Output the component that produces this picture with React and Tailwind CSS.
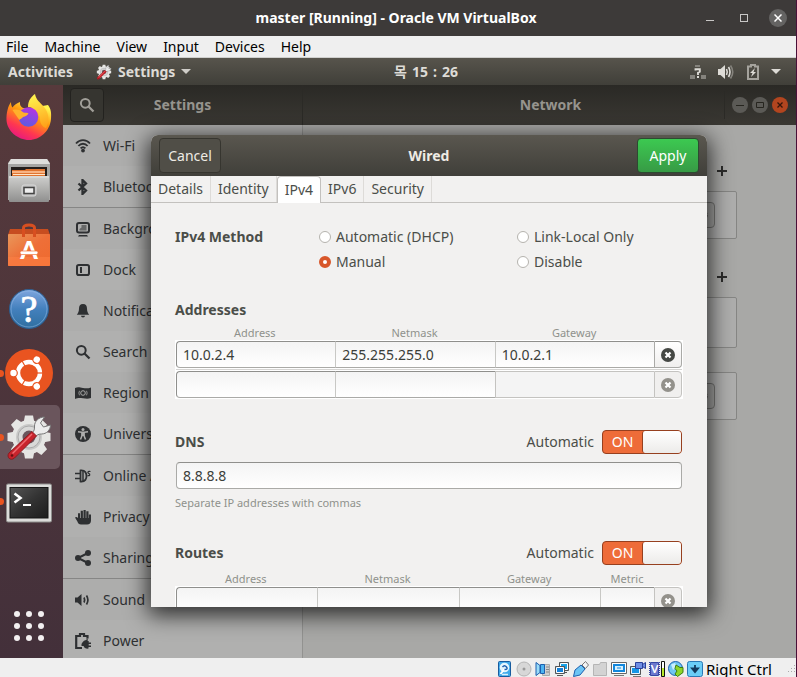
import React from "react";

const menus = ["File", "Machine", "View", "Input", "Devices", "Help"];

const sidebarGroups = [
  [
    ["Wi-Fi", "wifi"],
    ["Bluetooth", "bluetooth"],
  ],
  [
    ["Background", "background"],
    ["Dock", "dock"],
    ["Notifications", "bell"],
    ["Search", "search"],
    ["Region & Language", "region"],
    ["Universal Access", "access"],
  ],
  [
    ["Online Accounts", "online"],
    ["Privacy", "privacy"],
    ["Sharing", "sharing"],
  ],
  [
    ["Sound", "sound"],
    ["Power", "power"],
  ],
];

const glyphs = {
  wifi: (
    <g fill="none" stroke="currentColor" strokeWidth="1.8">
      <path d="M1 5.5C5 1 11 1 15 5.5" />
      <path d="M3.4 8C6 5 10 5 12.6 8" />
      <path d="M5.6 10.4c1.5-1.5 3.300-1.500 4.800 0" />
      <circle cx="8" cy="12.600" r="1.900" fill="currentColor" stroke="none" />
    </g>
  ),
  bluetooth: (
    <path d="M3.500 4.500 11 11.500 7.500 15V1L11 4.500 3.500 11.500" fill="none" stroke="currentColor" strokeWidth="2.300" />
  ),
  background: (
    <g>
      <rect x="2" y="2" width="12" height="9.500" rx="2" fill="none" stroke="currentColor" strokeWidth="2" />
      <path d="M4.500 9.500V8l2-1.500V4h5v5.500z" fill="currentColor" opacity=".55" />
      <path d="M4 14h8l1 1.500H3z" fill="currentColor" />
    </g>
  ),
  dock: (
    <g fill="none" stroke="currentColor">
      <rect x="2" y="3" width="12" height="10" rx="1.800" strokeWidth="2" />
      <path d="M6 5v6" strokeWidth="2" />
    </g>
  ),
  bell: (
    <path
      d="M8 1c2.900 0 4 2 4 4.500 0 3 .8 4.600 2.200 6.200H1.800C3.200 10.100 4 8.500 4 5.500 4 3 5.100 1 8 1zM6 12.800h4a2 1.700 0 0 1-4 0z"
      fill="currentColor"
    />
  ),
  search: (
    <g fill="none" stroke="currentColor" strokeWidth="2">
      <circle cx="6.300" cy="6.300" r="4.400" />
      <path d="m9.500 9.500 5 5" strokeWidth="2.300" />
    </g>
  ),
  region: (
    <g>
      <path d="M0 3c3-1.500 5-.500 8 0s5 .500 8-.500V13c-3 1.200-5 .800-8 .300S3 12.500 0 14z" fill="currentColor" />
      <circle cx="8" cy="8" r="2.300" fill="none" stroke="#a9a9a8" />
      <path d="M4.500 5.800a4.500 4.500 0 0 0 0 4.500M11.500 5.800a4.500 4.500 0 0 1 0 4.500" fill="none" stroke="#a9a9a8" strokeWidth=".8" />
    </g>
  ),
  access: (
    <g>
      <circle cx="8" cy="8" r="8" fill="currentColor" />
      <circle cx="8" cy="3.400" r="1.500" fill="#adadac" />
      <path d="M3 5.800 6.800 6.200h2.400L13 5.800M7 6.500v3L5.500 13.500M9 6.500v3l1.500 4" fill="none" stroke="#adadac" strokeWidth="1.500" />
      <path d="M6.500 6h3v4h-3z" fill="#adadac" />
    </g>
  ),
  online: (
    <g fill="none" stroke="currentColor" strokeWidth="1.800">
      <path d="M5.500 2.500c5-.5 6 3 6 5.500s-1 6-6 5.500z" />
      <path d="M0 5.500h5M0 10.500h5M8 3v10" strokeWidth="1.500" />
      <path d="M15.500 3.500c-3-.8-3.200 1.300-1.800 1.900s1.800 2.800-1.200 2.200" strokeWidth="1.200" />
    </g>
  ),
  privacy: (
    <path
      d="M3 4.200h2V9h.7V1.800h2.200V9h.6V1h2.200v8h.6V2.200h2.200V9h.4V5.500H16v6c0 2.500-1.500 4-4 4H6c-2 0-3-1-3.600-3L0 8.500c1-1 2-.500 3 .5z"
      fill="currentColor"
    />
  ),
  sharing: (
    <g fill="currentColor">
      <path d="M13 3 3 8l10 5" fill="none" stroke="currentColor" strokeWidth="2" />
      <circle cx="3" cy="8" r="3" />
      <circle cx="13" cy="3" r="3" />
      <circle cx="13" cy="13" r="3" />
    </g>
  ),
  sound: (
    <g>
      <path d="M0 5.500h2.500L6.500 2v12L2.500 10.500H0z" fill="currentColor" />
      <path d="M9 5.500q1.300 2.500 0 5M11.500 3.500q2.800 4.500 0 9" fill="none" stroke="currentColor" strokeWidth="1.700" />
    </g>
  ),
  power: (
    <g>
      <path d="M12.500 5.500V3H9V1H5v2H1.200v12H7" fill="none" stroke="currentColor" strokeWidth="2.200" />
      <path d="M6.500 11q2-4 5-4V5.500h1.200V8h1v1.500H16V11h-2.300v1.500H16V14h-2.500v1.500q-4 .8-5-2.500H6.500z" fill="currentColor" />
    </g>
  ),
};

function Glyph({ name, className = "size-4" }) {
  return (
    <svg viewBox="0 0 16 16" className={className} aria-hidden="true">
      {glyphs[name]}
    </svg>
  );
}

function SettingsLogo({ className }) {
  const teeth = [0, 45, 90, 135, 180, 225, 270, 315];
  return (
    <svg viewBox="0 0 48 48" className={className} aria-hidden="true">
      <g fill="#e6e6e4">
        {teeth.map((a) => (
          <path key={a} d="M18.500 10 20 2.500h8l1.500 7.500z" transform={"rotate(" + a + " 24 24)"} />
        ))}
        <circle cx="24" cy="24" r="17" />
      </g>
      <circle cx="24" cy="24" r="13" fill="#c9c9c8" />
      <circle cx="24" cy="24" r="11" fill="#d9d9d8" stroke="#aaa" />
      <circle cx="24" cy="24" r="6.500" fill="#6a555c" />
      <path
        d="M27 20c2.500-2 2.500-4 2.500-7 0-4.500 4-9 10-9l-4 6 3 4 7-2c0 5-4 9-9 9-3 0-4.500 1-6.500 3z"
        fill="#ececec"
        stroke="#777"
      />
      <path d="M27 18.500 31.500 23 9.500 45c-4 3.500-8.500-1-5.500-5z" fill="#c8242c" stroke="#8c1a20" />
      <path d="M27 21 7.500 40.500" stroke="#ef6a70" strokeWidth="1.500" />
      <circle cx="7" cy="42.500" r="1.300" fill="#611" />
    </svg>
  );
}

function Firefox() {
  return (
    <svg viewBox="0 0 46 46" className="size-[46px]" aria-hidden="true">
      <defs>
        <linearGradient id="fx-body" x1=".8" y1=".1" x2=".25" y2="1">
          <stop offset="0" stopColor="#fff44f" />
          <stop offset=".35" stopColor="#ff980e" />
          <stop offset=".7" stopColor="#ff3750" />
          <stop offset="1" stopColor="#e31587" />
        </linearGradient>
        <linearGradient id="fx-globe" x1=".7" y1="0" x2=".3" y2="1">
          <stop offset="0" stopColor="#b833e1" />
          <stop offset="1" stopColor="#5b5ce0" />
        </linearGradient>
        <linearGradient id="fx-flame" x1=".4" y1="0" x2=".6" y2="1">
          <stop offset="0" stopColor="#fff44f" />
          <stop offset="1" stopColor="#ffa21a" />
        </linearGradient>
      </defs>
      <path
        d="M5 8c0 3 .5 4 1.500 5.500C8 11 11 9 14 8c-.5 3 1 5 3 6h8L42 11c3 4 3.500 8 3 14-1 12-11 21-22 21S1 37 .5 26C.300 19 2 12 5 8z"
        fill="url(#fx-body)"
      />
      <path d="M22 13c0-7 4-11 7-13 1 6 5 8 9 13 5 6 6 14 2 21-3-1-6-4-6-9 0-6-4-11-12-12z" fill="url(#fx-flame)" />
      <circle cx="22.500" cy="23" r="9.800" fill="url(#fx-globe)" />
      <path d="M6.500 16c5-1 8 0 11 2.500 2 .2 4 .2 5 1-1 2-3 3-5.500 3.500-1 1.500-3 2-3.500 3C12 24 9 20 6.500 16z" fill="#ffb02c" />
    </svg>
  );
}

function Files() {
  return (
    <svg viewBox="0 0 44 46" className="h-[46px] w-11" aria-hidden="true">
      <defs>
        <linearGradient id="cab" x1="0" y1="0" x2="0" y2="1">
          <stop offset="0" stopColor="#cfcfcd" />
          <stop offset="1" stopColor="#8f8f8e" />
        </linearGradient>
      </defs>
      <path d="M4 1h36l3 4v37H1V5z" fill="#a5a5a3" />
      <path d="M4 1h36l3 5H1z" fill="#dededc" />
      <path d="M4 9h36v9H4z" fill="#231e1c" />
      <path d="M5 12h13l1-1h19v8H5z" fill="#e07430" />
      <path d="M5 14h33" stroke="#ffc9a0" strokeWidth="1.500" />
      <path d="M6 16.500h32" stroke="#ffe4c8" />
      <rect x="2" y="18" width="40" height="26" rx="1" fill="url(#cab)" />
      <path d="M2 19h40" stroke="#e4e4e2" />
      <rect x="15" y="27" width="14" height="11" rx="2" fill="#bbb" stroke="#d8d8d8" />
      <rect x="17" y="29.500" width="10" height="6" fill="#eee" stroke="#444" strokeWidth="1.500" />
    </svg>
  );
}

function Software() {
  return (
    <svg viewBox="0 0 44 46" className="h-[46px] w-11" aria-hidden="true">
      <defs>
        <linearGradient id="bag" x1="0" y1="0" x2="1" y2="1">
          <stop offset="0" stopColor="#e9975a" />
          <stop offset=".5" stopColor="#ee6f38" />
          <stop offset="1" stopColor="#ef6a2e" />
        </linearGradient>
      </defs>
      <path d="M3 7h38l2 6H1z" fill="#c74d20" />
      <rect x="1" y="12" width="42" height="32" rx="1" fill="url(#bag)" />
      <path d="M16.500 15V6c0-4 11-4 11 0v9" fill="none" stroke="#d84f20" strokeWidth="3" />
      <path d="M1 35h42v9H1z" fill="#ff8146" opacity=".5" />
      <text x="22" y="37" textAnchor="middle" fontFamily="Lato, sans-serif" fontWeight="900" fontSize="25" fill="#fff">
        A
      </text>
      <rect x="13" y="29" width="18" height="3.500" rx="1.700" fill="#fff" stroke="#ef7238" strokeWidth=".7" />
    </svg>
  );
}

function HelpLogo() {
  return (
    <svg viewBox="0 0 42 42" className="size-[42px]" aria-hidden="true">
      <defs>
        <linearGradient id="help" x1="0" y1="0" x2="0" y2="1">
          <stop offset="0" stopColor="#7fa6de" />
          <stop offset=".5" stopColor="#4380bd" />
          <stop offset="1" stopColor="#2f6f9f" />
        </linearGradient>
      </defs>
      <circle cx="21" cy="21" r="19.500" fill="url(#help)" stroke="#2b5f92" />
      <circle cx="21" cy="21" r="18" fill="none" stroke="#8fb8e4" strokeWidth=".8" opacity=".7" />
      <text x="21" y="34" textAnchor="middle" fontFamily="Liberation Serif, serif" fontSize="38" fill="#fff" stroke="#fff" strokeWidth=".8">
        ?
      </text>
    </svg>
  );
}

function UbuntuLogo() {
  return (
    <svg viewBox="0 0 48 48" className="size-12" aria-hidden="true">
      <circle cx="24" cy="24" r="24" fill="#e95420" />
      <circle cx="24" cy="24" r="11" fill="none" stroke="#fff" strokeWidth="4.400" />
      {[0, 120, 240].map((a) => (
        <g key={a} transform={"rotate(" + a + " 24 24)"}>
          <path d="M16.500 24h-7" stroke="#e95420" strokeWidth="1.200" transform="rotate(60 24 24)" />
          <circle cx="8.500" cy="24" r="4.400" fill="#e95420" />
          <circle cx="8.500" cy="24" r="3.200" fill="#fff" />
        </g>
      ))}
    </svg>
  );
}

function Terminal() {
  return (
    <svg viewBox="0 -4 46 44" className="h-11 w-[46px]" aria-hidden="true">
      <defs>
        <linearGradient id="term" x1="0" y1="0" x2="1" y2="1">
          <stop offset="0" stopColor="#555" />
          <stop offset=".5" stopColor="#333" />
          <stop offset="1" stopColor="#1c1c1c" />
        </linearGradient>
      </defs>
      <rect x=".5" y="1" width="45" height="38" rx="1.500" fill="#dcdcda" stroke="#8f8f8d" />
      <rect x="4" y="4.500" width="38" height="30.500" fill="url(#term)" stroke="#151515" />
      <path d="m8.500 10.500 6 4.500-6 4.500" fill="none" stroke="#fff" strokeWidth="2.600" />
      <path d="M17 22h8" stroke="#fff" strokeWidth="2" />
    </svg>
  );
}

function AppGrid() {
  return (
    <svg viewBox="0 0 30 30" className="size-[30px]" aria-hidden="true">
      {[3, 15, 27].map((y) => [3, 15, 27].map((x) => <circle key={x + "-" + y} cx={x} cy={y} r="3" fill="#f3f0f1" />))}
    </svg>
  );
}

const dockApps = [
  { name: "Firefox", icon: <Firefox /> },
  { name: "Files", icon: <Files /> },
  { name: "Ubuntu Software", icon: <Software /> },
  { name: "Help", icon: <HelpLogo /> },
  { name: "Ubuntu", icon: <UbuntuLogo />, running: true },
  { name: "Settings", icon: <SettingsLogo className="size-12" />, running: true, active: true },
  { name: "Terminal", icon: <Terminal />, running: true },
];

function Dock() {
  return (
    <nav className="flex w-[63px] shrink-0 flex-col justify-between bg-linear-to-b from-[#573a3c] to-[#43303a]">
      <div>
        {dockApps.map((app) => (
          <button
            key={app.name}
            aria-label={app.name}
            className={
              "relative flex h-16 w-[60px] items-center justify-center rounded-r-[5px] pr-[2px] " +
              (app.active ? "bg-[#6a555c]" : "")
            }
          >
            {app.running && <span className="absolute top-[29px] -left-[3px] size-[7px] rounded-full bg-[#e95420]" />}
            {app.icon}
          </button>
        ))}
      </div>
      <button aria-label="Show Applications" className="flex h-16 w-[60px] items-center justify-center pr-[2px]">
        <AppGrid />
      </button>
    </nav>
  );
}

function TitleBar() {
  return (
    <header className="grid h-9 shrink-0 grid-cols-[100px_1fr_100px] items-center bg-[#3d3a39] text-white">
      <span />
      <h1 className="pr-1 text-center text-sm font-bold whitespace-nowrap">master [Running] - Oracle VM VirtualBox</h1>
      <div className="flex items-center justify-end gap-[21px] pr-[9px]">
        <button aria-label="Minimize" className="mt-[4px] h-px w-[8px] bg-[#c8c7c6]" />
        <button aria-label="Maximize" className="ml-[5px] size-[8px] border border-[#c8c7c6]" />
        <button aria-label="Close" className="flex size-[18px] items-center justify-center rounded-full bg-[#646362]">
          <svg viewBox="0 0 8 8" className="size-2" aria-hidden="true">
            <path d="m.5.5 7 7m0-7-7 7" stroke="#fff" strokeWidth="1.500" />
          </svg>
        </button>
      </div>
    </header>
  );
}

function TopBar() {
  return (
    <div className="flex h-[27px] shrink-0 items-center bg-linear-to-b from-[#57544c] to-[#403f39] text-sm font-bold text-[#dddbd6]">
      <div className="flex flex-1 items-center pl-2">
        <button>Activities</button>
        <button className="ml-[23px] flex items-center">
          <SettingsLogo className="size-4" />
          <span className="mr-[6px] ml-[6px]">Settings</span>
          <svg viewBox="0 0 10 5" className="h-[5px] w-[10px]" aria-hidden="true">
            <path d="M0 0h10L5 5z" fill="#cfcdc8" />
          </svg>
        </button>
      </div>
      <time className="flex gap-[5px] pl-[63px]">
        <span>목</span>
        <span>15</span>
        <span>:</span>
        <span>26</span>
      </time>
      <div className="flex flex-1 items-center justify-end pr-[15px]">
        <svg viewBox="0 0 16 16" className="size-4" aria-hidden="true">
          <path d="M0 11h5v4H0zM11 11h5v4h-5zM5 1h5v2H5z" fill="#85837d" />
          <path d="M5.500 6.500V5.200h4.300v2.500L8 8.800V11M7 13h2" fill="none" stroke="#dddbd6" strokeWidth="1.900" />
        </svg>
        <svg viewBox="0 0 16 16" className="ml-3 size-4" aria-hidden="true">
          <path d="M0 5h2.500L7 1v14l-4.500-4H0z" fill="#dddbd6" />
          <path d="M8.500 5q1.500 3 0 6M10.500 3q3 5 0 10" fill="none" stroke="#dddbd6" strokeWidth="1.600" />
          <path d="M12.500 1.500q4.500 6.500 0 13" fill="none" stroke="#85837d" strokeWidth="1.600" />
        </svg>
        <svg viewBox="0 0 12 16" className="ml-[13px] h-4 w-3" aria-hidden="true">
          <path d="M1 2.500h3V1h4v1.500h3V15H1z" fill="none" stroke="#a5a39d" strokeWidth="2" />
          <path d="M8 4 3 9h2.500L4 13l5-5H6.500z" fill="#dddbd6" />
        </svg>
        <svg viewBox="0 0 10 5" className="ml-3 h-[5px] w-[10px]" aria-hidden="true">
          <path d="M0 0h10L5 5z" fill="#dddbd6" />
        </svg>
      </div>
    </div>
  );
}

function SidebarPane() {
  return (
    <aside className="w-60 shrink-0 border-r border-[#929290] bg-[#b0b0af] text-[#2e3032]">
      {sidebarGroups.map((group, g) => (
        <ul key={g} className={g > 0 ? "border-t border-[#868685]" : ""}>
          {group.map(([label, icon]) => (
            <li key={label} className="flex h-[41px] items-center gap-3 overflow-hidden pl-3 text-sm whitespace-nowrap odd:bg-[#adadac]">
              <Glyph name={icon} className="size-4 shrink-0" />
              {label}
            </li>
          ))}
        </ul>
      ))}
    </aside>
  );
}

function Plus() {
  return (
    <div className="flex h-[30px] items-center justify-end pr-[10px]">
      <button aria-label="Add">
        <svg viewBox="0 0 10 10" className="block size-[10px]" aria-hidden="true">
          <path d="M5 0v10M0 5h10" stroke="#2c2c2b" strokeWidth="2" />
        </svg>
      </button>
    </div>
  );
}

function GearCard() {
  return (
    <div className="flex h-12 items-center justify-end rounded-[2px] border border-[#868684] bg-[#aeaead] pr-[21px]">
      <button aria-label="Options" className="flex h-[26px] w-[30px] items-center justify-center rounded-[4px] border border-[#757573] bg-[#a6a6a4]">
        <svg viewBox="0 0 16 16" className="size-4" aria-hidden="true">
          <circle cx="8" cy="8" r="5" fill="none" stroke="#333" strokeWidth="5" strokeDasharray="2 2" />
        </svg>
      </button>
    </div>
  );
}

function NetworkPane() {
  return (
    <main className="min-w-0 flex-1 bg-[#a8a8a6] px-[59px] pt-[31px]">
      <Plus />
      <div className="mt-[5px]">
        <GearCard />
      </div>
      <div className="mt-[23px]">
        <Plus />
      </div>
      <div className="mt-[5px] h-[51px] rounded-[2px] border border-[#868684] bg-[#aeaead]" />
      <div className="mt-6">
        <GearCard />
      </div>
    </main>
  );
}

const roundBtn = "flex size-4 items-center justify-center rounded-full";

function SettingsHeader() {
  return (
    <header className="flex h-10 shrink-0 bg-linear-to-b from-[#2a2925] to-[#3a3833] text-sm font-bold text-[#96948e]">
      <div className="grid w-60 shrink-0 grid-cols-[34px_1fr_34px] items-center border-r border-[#2b2a26] px-[7px]">
        <button
          aria-label="Search"
          className="flex size-[34px] items-center justify-center rounded-[4px] border border-[#23221f] bg-[#363530]"
        >
          <Glyph name="search" className="size-4 text-[#a19f99]" />
        </button>
        <h2 className="text-center">Settings</h2>
      </div>
      <div className="grid flex-1 grid-cols-[74px_1fr_72px] items-center">
        <span />
        <h2 className="text-center">Network</h2>
        <div className="flex h-7 items-center justify-end gap-1 border-l border-[#2b2a26] pr-2">
          <button aria-label="Minimize window" className={roundBtn + " bg-[#5b5a56]"}>
            <svg viewBox="0 0 16 16" className="size-4" aria-hidden="true">
              <path d="M4 8.500h8" stroke="#26251f" />
            </svg>
          </button>
          <button aria-label="Maximize window" className={roundBtn + " bg-[#5b5a56]"}>
            <svg viewBox="0 0 16 16" className="size-4" aria-hidden="true">
              <path d="M4.500 5.500h7v5h-7z" fill="none" stroke="#26251f" />
            </svg>
          </button>
          <button aria-label="Close window" className={roundBtn + " bg-[#b2451f]"}>
            <svg viewBox="0 0 16 16" className="size-4" aria-hidden="true">
              <path d="m5.500 5.500 5 5m0-5-5 5" stroke="#35150a" strokeWidth="1.300" />
            </svg>
          </button>
        </div>
      </div>
    </header>
  );
}

function Radio({ label, checked }) {
  return (
    <label className="flex h-[25px] items-center gap-[5px]">
      <input
        type="radio"
        name="ipv4-method"
        defaultChecked={checked}
        className="size-3 appearance-none rounded-full border border-[#b5b3ae] bg-white checked:border-4 checked:border-[#d8572a]"
      />
      {label}
    </label>
  );
}

function Switch({ id }) {
  return (
    <label htmlFor={id} className="relative flex items-center gap-2">
      Automatic
      <input id={id} type="checkbox" defaultChecked className="sr-only" />
      <span className="flex h-6 w-20 rounded-[4px] border border-[#96401f] bg-[#ee6c39] text-white">
        <span className="flex-1 text-center leading-[22px]">ON</span>
        <span className="w-[39px] rounded-[3px] border-l border-[#96401f] bg-linear-to-b from-white to-[#ecebe9]" />
      </span>
    </label>
  );
}

function EntryRow({ cells, name, muted }) {
  return (
    <div className="flex h-[27px]">
      {cells.map((cell, i) => (
        <input
          key={i}
          type="text"
          aria-label={name + " " + cell.label}
          defaultValue={cell.value}
          disabled={cell.disabled}
          className={
            "min-w-0 border-y border-l px-[6px] text-[#3b3e39] first:rounded-l-[4px] first:border-l-[#8f8f8c] " +
            cell.width +
            (cell.disabled
              ? " border-[#c4c3c0] bg-[#f4f4f4]"
              : " border-t-[#8f8f8c] border-b-[#aaaaa7] border-l-[#c8c8c5] bg-linear-to-b from-[#f4f4f4] to-white")
          }
        />
      ))}
      <button
        aria-label={"Remove " + name}
        className={
          "flex w-7 shrink-0 items-center justify-center rounded-r-[4px] border " +
          (muted ? "border-[#c4c3c0] bg-[#f0efee]" : "border-[#aaaaa7] border-t-[#8f8f8c] bg-linear-to-b from-white to-[#f0efee]")
        }
      >
        <svg viewBox="0 0 14 14" className="size-[14px]" aria-hidden="true">
          <circle cx="7" cy="7" r="7" fill={muted ? "#93918b" : "#454844"} />
          <path d="m4.500 4.500 5 5m0-5-5 5" stroke="#fff" strokeWidth="2.200" />
        </svg>
      </button>
    </div>
  );
}

function ColumnLabels({ columns }) {
  return (
    <div className="flex h-[15px] pr-[29px] text-[11px] leading-[15px] text-[#8f918c]">
      {columns.map(([label, width]) => (
        <span key={label} className={"text-center " + width}>
          {label}
        </span>
      ))}
    </div>
  );
}

const third = "flex-1";
const routeColumns = [
  ["Address", "flex-1"],
  ["Netmask", "flex-1"],
  ["Gateway", "flex-1"],
  ["Metric", "w-[54px]"],
];

const tabs = ["Details", "Identity", "IPv4", "IPv6", "Security"];

function WiredDialog() {
  return (
    <section
      role="dialog"
      aria-label="Wired"
      className="flex w-[556px] max-w-full flex-col overflow-hidden rounded-t-[7px] bg-[#f2f1f0] text-sm text-[#4b4e49] shadow-[0_5px_22px_3px_rgba(0,0,0,0.75)]"
    >
      <header className="grid h-[41px] shrink-0 grid-cols-[1fr_auto_1fr] items-center bg-linear-to-b from-[#5a574f] to-[#403f3a] px-2 text-[#eeebe4]">
        <button className="h-[35px] w-[62px] justify-self-start rounded-[4px] border border-[#36352f] bg-[#504e47]">Cancel</button>
        <h2 className="font-bold">Wired</h2>
        <button className="h-[35px] w-[62px] justify-self-end rounded-[4px] border border-[#2d4a31] bg-linear-to-b from-[#3cc951] to-[#379b45] text-white">
          Apply
        </button>
      </header>
      <div role="tablist" className="flex h-[27px] shrink-0 border-b border-[#c3c1be]">
        {tabs.map((tab) => (
          <button
            key={tab}
            role="tab"
            aria-selected={tab === "IPv4"}
            className={
              tab === "IPv4"
                ? "-mb-px rounded-t-[4px] border border-b-0 border-[#c3c1be] bg-white px-[7px]"
                : "border-r border-[#dddbd8] px-[7px]"
            }
          >
            {tab}
          </button>
        ))}
      </div>
      <div className="min-h-0 flex-1 overflow-hidden px-6 pt-[21px]">
        <fieldset className="grid grid-cols-[144px_198px_1fr]">
          <legend className="float-left h-[25px] font-bold leading-[25px]">IPv4 Method</legend>
          <div className="col-start-2">
            <Radio label="Automatic (DHCP)" />
            <Radio label="Manual" checked />
          </div>
          <div>
            <Radio label="Link-Local Only" />
            <Radio label="Disable" />
          </div>
        </fieldset>

        <h3 className="mt-[26px] mb-[5px] font-bold">Addresses</h3>
        <ColumnLabels
          columns={[
            ["Address", third],
            ["Netmask", third],
            ["Gateway", third],
          ]}
        />
        <div className="bg-white p-px">
          <EntryRow
            name="Address 1"
            cells={[
              { label: "Address", value: "10.0.2.4", width: third },
              { label: "Netmask", value: "255.255.255.0", width: third },
              { label: "Gateway", value: "10.0.2.1", width: third },
            ]}
          />
          <hr className="my-px border-[#d6d5d3]" />
          <EntryRow
            name="Address 2"
            muted
            cells={[
              { label: "Address", width: third },
              { label: "Netmask", width: third },
              { label: "Gateway", width: third, disabled: true },
            ]}
          />
        </div>

        <div className="mt-[31px] flex items-center justify-between pr-px">
          <h3 className="font-bold">DNS</h3>
          <Switch id="dns-auto" />
        </div>
        <div className="mt-2 px-px">
          <input
            type="text"
            aria-label="DNS"
            defaultValue="8.8.8.8"
            className="block h-[27px] w-full rounded-[4px] border border-[#aaaaa7] border-t-[#8f8f8c] bg-linear-to-b from-[#f4f4f4] to-white px-[6px] text-[#3b3e39]"
          />
        </div>
        <p className="mt-[6px] text-[11px] leading-4 text-[#8f918c]">Separate IP addresses with commas</p>

        <div className="mt-[30px] mb-[6px] flex items-center justify-between pr-px">
          <h3 className="font-bold">Routes</h3>
          <Switch id="routes-auto" />
        </div>
        <ColumnLabels columns={routeColumns} />
        <div className="bg-white p-px">
          <EntryRow
            name="Route"
            muted
            cells={routeColumns.map(([label, width]) => ({ label, width }))}
          />
        </div>
      </div>
    </section>
  );
}

const ink = "#1d5fae";
const statusIcons = [
  [
    "Hard disk",
    <g key="i">
      <rect x="1.500" y=".5" width="12" height="15" rx="1" fill="#3fa9ea" stroke="#175b9e" />
      <circle cx="7.500" cy="6.500" r="4.800" fill="#e4f5fd" />
      <path d="M3.500 13 7.500 8" stroke="#fff" strokeWidth="2" />
      <path d="M5 13.500h6" stroke="#d8f1fc" strokeWidth="1.500" />
      <path d="M5.500 6q2-2.500 4 0t-2 2.500" fill="none" stroke={ink} strokeWidth="1.400" />
    </g>,
  ],
  [
    "Optical drive",
    <g key="i">
      <circle cx="8" cy="8" r="7" fill="#d7d7d7" stroke="#b5b5b5" />
      <circle cx="8" cy="8" r="1.500" fill="#999" />
    </g>,
  ],
  [
    "Audio",
    <g key="i">
      <path d="M8.500 3.500h6v11h-7v-2h1z" fill="#cfcfcf" stroke="#aaa" />
      <path d="M11 6h3M11 8.500h3M11 11h3" stroke="#888" />
      <path d="M1 1.500 5 4.500v7l-4 3z" fill="#9adcf8" stroke={ink} />
      <path d="M5.500 3.500h4v9h-4z" fill="#4cb4f0" stroke={ink} />
    </g>,
  ],
  [
    "Network",
    <g key="i">
      <path d="M5.500 1.500h9v8h-9z" fill="#18a4ea" stroke="#555" />
      <path d="M6.500 2.500h7v6h-7z" fill="none" stroke="#fff" />
      <path d="M1.500 5.500h9v7h-9z" fill="#1583dc" stroke="#555" />
      <path d="M2.500 6.500h7v5h-7z" fill="none" stroke="#fff" />
      <path d="M3 14.500h6M10 11.500h3" stroke="#555" />
    </g>,
  ],
  [
    "USB",
    <g key="i">
      <path d="m.5 15.500 1.500-6.500L8 4l4 4-5 6z" fill="#6cc5f5" stroke={ink} />
      <path d="m9 4 3.500-3.500 3 3.500-3 3.500z" fill="#f4f4f4" stroke="#777" />
    </g>,
  ],
  [
    "Shared folders",
    <path key="i" d="M1.500 3.500h6l1-2h6v13h-13z" fill="#d3d3d3" stroke="#b5b5b5" />,
  ],
  [
    "Display",
    <g key="i">
      <path d="M.5 1.500h15v11H.5z" fill="#fff" stroke="#666" />
      <path d="M3 4h10v6H3z" fill="#d5effc" stroke="#1287dc" strokeWidth="2" />
      <path d="M6 6.500h4v1H6z" fill="#1287dc" />
      <path d="M3 14.500h10" stroke="#777" />
    </g>,
  ],
  [
    "Recording",
    <g key="i">
      <path d="M.5 5.500h10v8H.5z" fill="#1596e6" stroke="#555" />
      <path d="M1.500 6.500h8v6h-8z" fill="none" stroke="#e8f6ff" />
      <path d="M3 15.500h8" stroke="#777" />
      <path d="M5.500 1.500h7v6h-7zM12.500 3.500l3-2v6l-3-2z" fill="#6f8fe4" stroke="#2a409a" />
    </g>,
  ],
  [
    "Processor",
    <g key="i">
      <path d="M.5 1v14M10.500 1v14" stroke="#3646a5" strokeDasharray="1 1" />
      <path d="M1.500 1.500h8v13h-8z" fill="#6d79cd" stroke="#3646a5" />
      <text x="5.500" y="12" textAnchor="middle" fontSize="11" fontWeight="700" fontFamily="Lato, sans-serif" fill="#fff">
        V
      </text>
      <path d="M12.500.5h3v15h-3z" fill="#b9e82b" stroke="#111" />
      <path d="M13 1h2v6h-2z" fill="#fff" />
    </g>,
  ],
  [
    "Mouse integration",
    <g key="i">
      <circle cx="7.500" cy="7.500" r="7" fill="#6fc6f2" stroke={ink} />
      <path d="M3 3.500 7 2l1.500 4L5 9z" fill="#c9eefd" />
      <path d="m8 4 4 2.500h3v5L9.500 15.500 7 13l2-3-2-2.500z" fill="#8ed62a" stroke="#3a7d12" />
    </g>,
  ],
  [
    "Keyboard",
    <g key="i">
      <rect x=".5" y=".5" width="15" height="15" rx="2" fill="#6bcdf7" stroke="#2a78b5" />
      <path d="M8 4v5M5 7.500h6L8 11z" fill="#143a5e" stroke="#143a5e" strokeWidth="1.800" />
    </g>,
  ],
];

function StatusBar() {
  return (
    <footer className="flex h-[19px] shrink-0 items-center justify-end overflow-hidden bg-[#efefef] pt-[3px] text-black">
      <div className="flex gap-[3px]">
        {statusIcons.map(([name, art]) => (
          <svg key={name} viewBox="0 0 16 16" role="img" aria-label={name} className="size-4">
            {art}
          </svg>
        ))}
      </div>
      <span className="ml-[3px] text-[15px] leading-[18px]">Right Ctrl</span>
      <svg viewBox="0 0 10 10" className="ml-[14px] size-[10px]" aria-hidden="true">
        <path d="M8 1h1v1H8zM5 4h1v1H5zM8 4h1v1H8zM2 7h1v1H2zM5 7h1v1H5zM8 7h1v1H8z" fill="#aaa" />
      </svg>
    </footer>
  );
}

export default function App() {
  return (
    <div className="flex h-screen flex-col overflow-hidden border-r border-[#4a1038] font-['Noto_Sans','Noto_Sans_CJK_KR',sans-serif]">
      <TitleBar />
      <nav className="flex h-[22px] shrink-0 items-center gap-4 border-b border-[#cfcfcd] bg-[#efefef] px-[6px] text-sm text-black">
        {menus.map((menu) => (
          <button key={menu}>{menu}</button>
        ))}
      </nav>
      <TopBar />
      <div className="flex min-h-0 flex-1">
        <Dock />
        <div className="relative flex min-w-0 flex-1 flex-col overflow-hidden">
          <SettingsHeader />
          <div className="flex min-h-0 flex-1">
            <SidebarPane />
            <NetworkPane />
          </div>
          <div className="absolute inset-0 flex justify-center pt-[50px] pr-px pb-[51px]">
            <WiredDialog />
          </div>
        </div>
      </div>
      <StatusBar />
    </div>
  );
}
